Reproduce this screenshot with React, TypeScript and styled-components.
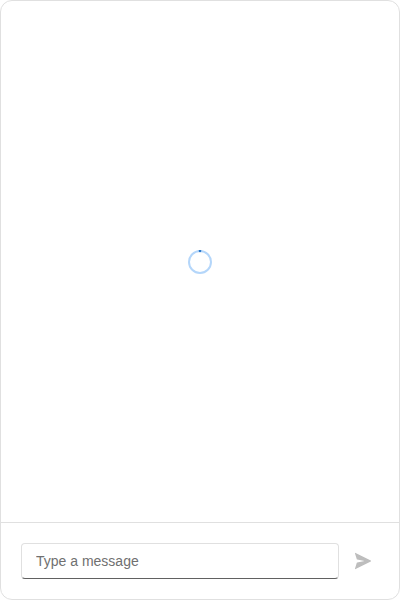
import React from "react";
import styled, { createGlobalStyle } from "styled-components";

const GlobalStyle = createGlobalStyle`
  body { margin: 0; background: #fff; }
`;

const ChatPanel = styled.main`
  box-sizing: border-box;
  width: 400px;
  height: 600px;
  display: flex;
  flex-direction: column;
  border: 1px solid #e0e0e0;
  border-radius: 12px;
  overflow: hidden;
  background: #fff;
  font-family: "Liberation Sans", Arial, sans-serif;
`;

const Conversation = styled.section`
  flex: 1;
  display: flex;
  align-items: center;
  justify-content: center;
`;

const Spinner = styled.svg`
  display: block;
  width: 24px;
  height: 24px;
  fill: none;
  stroke-width: 2;
`;

const Composer = styled.form`
  box-sizing: border-box;
  height: 77px;
  display: flex;
  align-items: center;
  gap: 8px;
  padding: 0 20px;
  border-top: 1px solid #e0e0e0;
`;

const MessageInput = styled.input`
  box-sizing: border-box;
  flex: 1;
  min-width: 0;
  height: 36px;
  padding: 0 14px;
  border: 1px solid #e0e0e0;
  border-bottom-color: #616161;
  border-radius: 4px;
  outline: none;
  background: #fff;
  font: 14px/20px "Liberation Sans", Arial, sans-serif;
  color: #242424;
  &::placeholder { color: #707070; opacity: 1; }
`;

const SendButton = styled.button`
  display: flex;
  align-items: center;
  justify-content: center;
  width: 32px;
  height: 32px;
  padding: 0;
  border: 0;
  background: transparent;
  color: #bdbdbd;
`;

export default function App() {
  return (
    <>
      <GlobalStyle />
      <ChatPanel>
        <Conversation>
          <Spinner viewBox="0 0 24 24" role="progressbar" aria-label="Loading">
            <circle cx="12" cy="12" r="11" stroke="#b4d6fa" />
            <path d="M10.85 1.06A11 11 0 0 1 13.15 1.06" stroke="#2b78ca" strokeWidth="2.2" />
          </Spinner>
        </Conversation>
        <Composer>
          <MessageInput placeholder="Type a message" />
          <SendButton type="button" aria-label="Send" disabled>
            <svg width="20" height="20" viewBox="0 0 20 20" fill="currentColor">
              <path d="M2.6 1.95a.4.4 0 0 0-.6.5L3.8 8.2a.5.5 0 0 0 .4.34L11.6 10l-7.4 1.46a.5.5 0 0 0-.4.34L2 17.55a.4.4 0 0 0 .6.5l15.2-7.6a.5.5 0 0 0 0-.9Z" />
            </svg>
          </SendButton>
        </Composer>
      </ChatPanel>
    </>
  );
}
